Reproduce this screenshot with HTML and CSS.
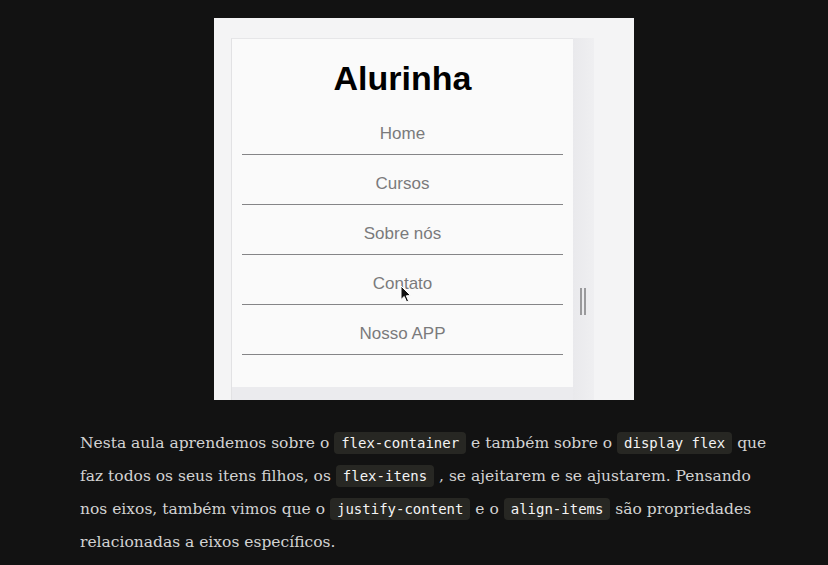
FILE: index.html
```html
<!DOCTYPE html>
<html lang="pt-BR">
<head>
<meta charset="utf-8">
<title>Alurinha</title>
<link rel="stylesheet" href="styles.css">
</head>
<body>
<main class="page">
  <figure class="shot">
    <div class="panel">
      <div class="panel-body">
        <h1 class="title">Alurinha</h1>
        <ul class="nav">
          <li>Home</li>
          <li>Cursos</li>
          <li>Sobre nós</li>
          <li class="hover">Contato
            <svg class="cursor" width="12" height="18" viewBox="0 0 12 18"><path d="M1 1 L1 14.5 L4.2 11.5 L6.6 17 L8.6 16.1 L6.3 10.8 L10.6 10.6 Z" fill="#111" stroke="#fff" stroke-width="1"/></svg>
          </li>
          <li>Nosso APP</li>
        </ul>
      </div>
      <div class="panel-foot"></div>
    </div>
    <div class="strip"><span class="handle"></span></div>
  </figure>
  <p class="text">Nesta aula aprendemos sobre o <code>flex-container</code> e também sobre o <code>display flex</code> que<br>faz todos os seus itens filhos, os <code>flex-itens</code> , se ajeitarem e se ajustarem. Pensando<br>nos eixos, também vimos que o <code>justify-content</code> e o <code>align-items</code> são propriedades<br>relacionadas a eixos específicos.</p>
</main>
</body>
</html>
```

FILE: styles.css
```css
html, body {
  margin: 0;
  padding: 0;
  background: #121212;
}

.page {
  padding-top: 18px;
}

.shot {
  margin: 0 0 0 214px;
  width: 420px;
  height: 382px;
  box-sizing: border-box;
  padding: 20px 0 0 17px;
  background: #f4f4f5;
  display: flex;
  align-items: stretch;
}

.panel {
  width: 342px;
  box-sizing: border-box;
  border-left: 1px solid #e2e2e4;
  border-top: 1px solid #e6e6e8;
  display: flex;
  flex-direction: column;
}

.panel-body {
  height: 348px;
  background: #fafafa;
  padding: 0 10px;
  box-sizing: border-box;
}

.panel-foot {
  flex: 1;
  background: #ebebee;
}

.strip {
  width: 21px;
  background: linear-gradient(to right, #e9e9ec, #efeff1);
  position: relative;
}

.handle {
  position: absolute;
  left: 7px;
  top: 250px;
  width: 6px;
  height: 27px;
  box-sizing: border-box;
  border-left: 2px solid #9a9a9c;
  border-right: 2px solid #9a9a9c;
}

.title {
  margin: 0;
  padding-top: 19px;
  height: 40px;
  line-height: 40px;
  font-family: "Liberation Sans", Arial, sans-serif;
  font-weight: bold;
  font-size: 34px;
  color: #000;
  text-align: center;
}

.nav {
  list-style: none;
  margin: 7px 0 0;
  padding: 0;
}

.nav li {
  position: relative;
  padding: 19px 0 10px;
  line-height: 20px;
  height: 20px;
  border-bottom: 1px solid #858587;
  font-family: "Liberation Sans", Arial, sans-serif;
  font-size: 17px;
  color: #7a7a7c;
  text-align: center;
}

.cursor {
  position: absolute;
  left: 158px;
  top: 30px;
}

.text {
  margin: 27px 0 0 80px;
  font-family: "DejaVu Serif", "Liberation Serif", serif;
  font-size: 15.5px;
  line-height: 33px;
  color: #d2d2d2;
  white-space: nowrap;
}

.text code {
  font-family: "DejaVu Sans Mono", monospace;
  font-size: 14px;
  color: #f4f4f4;
  background: #272723;
  border-radius: 4px;
  padding: 3px 7px;
}
```
